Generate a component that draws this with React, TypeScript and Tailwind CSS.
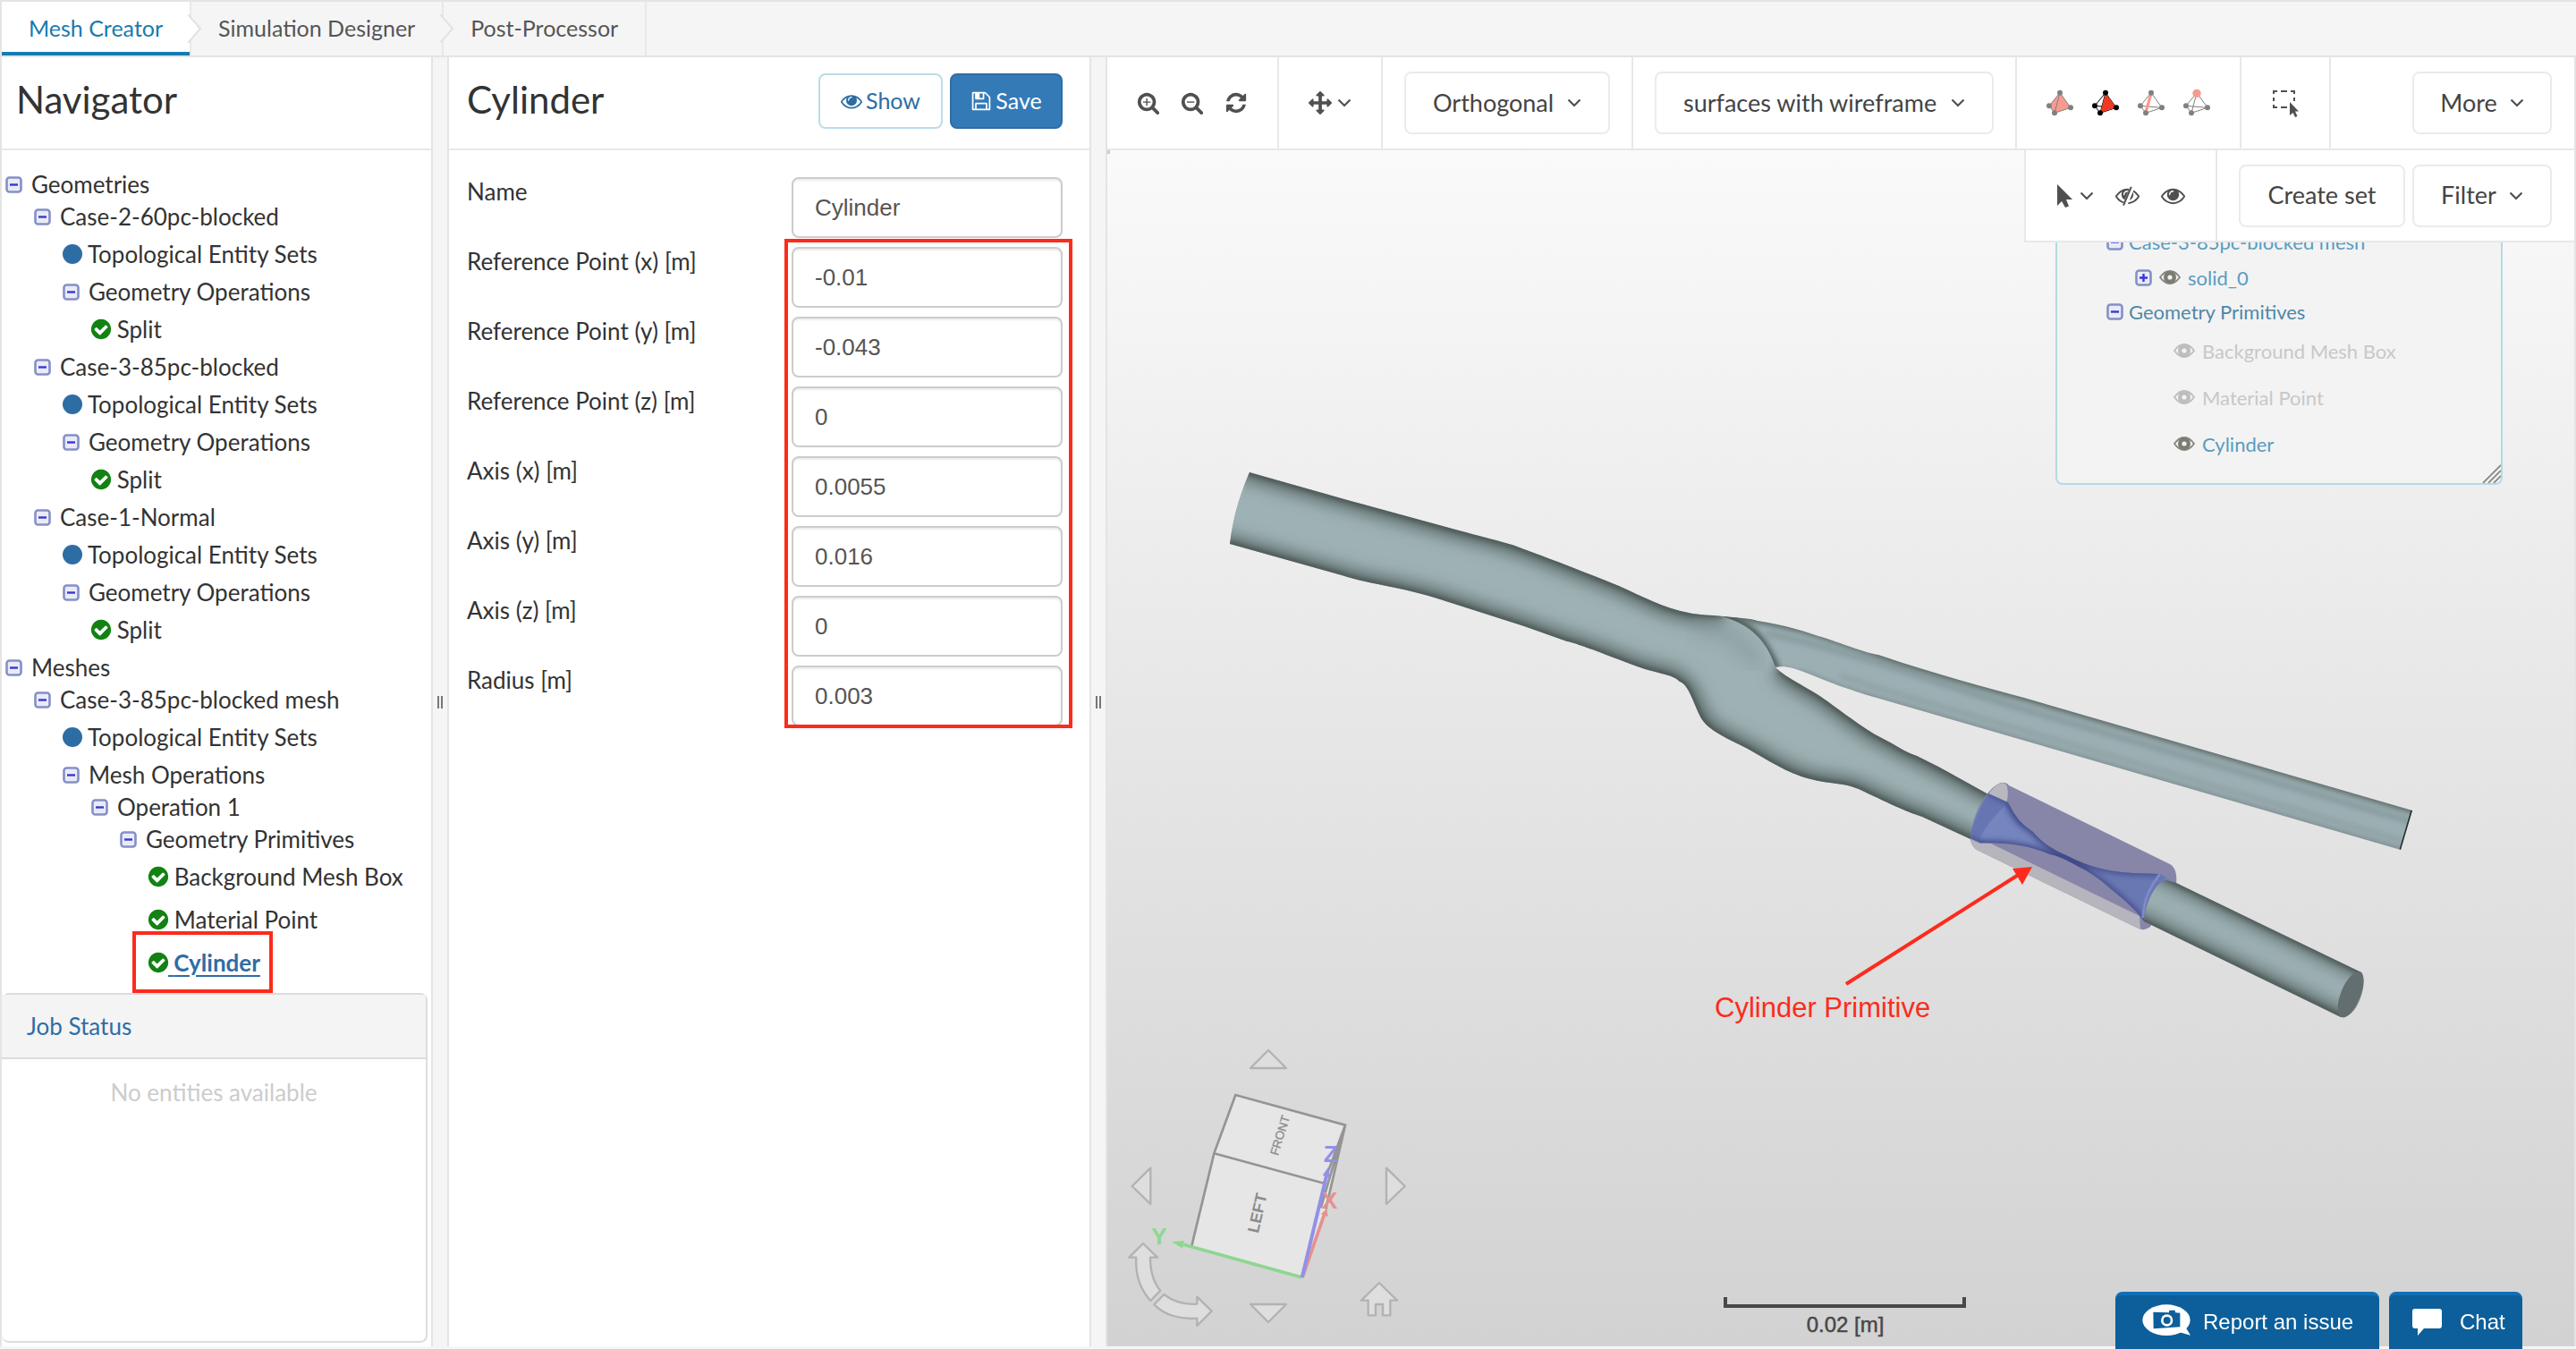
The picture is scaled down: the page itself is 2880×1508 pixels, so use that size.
import { useState } from 'react';
import type { ReactNode } from 'react';

const EYE = 'M1664 960q-152-236-381-353 61 104 61 225 0 185-131.5 316.5t-316.5 131.5-316.5-131.5-131.5-316.5q0-121 61-225-229 117-381 353 133 205 333.5 326.5t434.5 121.5 434.5-121.5 333.5-326.5zm-720-384q0-20-14-34t-34-14q-125 0-214.5 89.5t-89.5 214.5q0 20 14 34t34 14 34-14 14-34q0-86 61-147t147-61q20 0 34-14t14-34zm848 384q0 34-20 69-140 230-376.5 368.5t-499.5 138.5-499.5-139-376.5-368q-20-35-20-69t20-69q140-229 376.5-368t499.5-139 499.5 139 376.5 368q20 35 20 69z';
const LENS = 'M1216 832q0-185-131.5-316.5t-316.5-131.5-316.5 131.5-131.5 316.5 131.5 316.5 316.5 131.5 316.5-131.5 131.5-316.5zm512 832q0 53-37.5 90.5t-90.5 37.5q-54 0-90-38l-343-342q-179 124-399 124-143 0-273.5-55.5t-225-150-150-225-55.5-273.5 55.5-273.5 150-225 225-150 273.5-55.5 273.5 55.5 225 150 150 225 55.5 273.5q0 220-124 399l343 343q37 37 37 90z';
const REFRESH = 'M1639 1056q0 5-1 7-64 268-268 434.5t-478 166.5q-146 0-282.5-55t-243.5-157l-129 129q-19 19-45 19t-45-19-19-45v-448q0-26 19-45t45-19h448q26 0 45 19t19 45-19 45l-137 137q71 66 161 102t187 36q134 0 250-65t186-179q11-17 53-117 8-23 30-23h192q13 0 22.5 9.5t9.5 22.5zm25-800v448q0 26-19 45t-45 19h-448q-26 0-45-19t-19-45 19-45l138-138q-148-137-349-137-134 0-250 65t-186 179q-11 17-53 117-8 23-30 23h-199q-13 0-22.5-9.5t-9.5-22.5v-7q65-268 270-434.5t480-166.5q146 0 284 55.5t245 156.5l130-129q19-19 45-19t45 19 19 45z';
const ARROWS = 'M1792 896q0 26-19 45l-256 256q-19 19-45 19t-45-19-19-45v-128h-384v384h128q26 0 45 19t19 45-19 45l-256 256q-19 19-45 19t-45-19l-256-256q-19-19-19-45t19-45 45-19h128v-384h-384v128q0 26-19 45t-45 19-45-19l-256-256q-19-19-19-45t19-45l256-256q19-19 45-19t45 19 19 45v128h384v-384h-128q-26 0-45-19t-19-45 19-45l256-256q19-19 45-19t45 19l256 256q19 19 19 45t-19 45-45 19h-128v384h384v-128q0-26 19-45t45-19 45 19l256 256q19 19 19 45z';
const SAVE = 'M512 1536h768v-384h-768v384zm896 0h128v-896q0-14-10-38.5t-20-34.5l-281-281q-10-10-34-20t-39-10v416q0 40-28 68t-68 28h-576q-40 0-68-28t-28-68v-416h-128v1280h128v-416q0-40 28-68t68-28h832q40 0 68 28t28 68v416zm-384-928v-320q0-13-9.5-22.5t-22.5-9.5h-192q-13 0-22.5 9.5t-9.5 22.5v320q0 13 9.5 22.5t22.5 9.5h192q13 0 22.5-9.5t9.5-22.5zm640 32v928q0 40-28 68t-68 28h-1344q-40 0-68-28t-28-68v-1344q0-40 28-68t68-28h928q40 0 88 20t76 48l280 280q28 28 48 76t20 88z';
const CHECK = 'M1412 734q0-28-18-46l-91-90q-19-19-45-19t-45 19l-408 407-226-226q-19-19-45-19t-45 19l-91 90q-18 18-18 46 0 27 18 45l362 362q19 19 45 19 27 0 46-19l543-543q18-18 18-45zm252 162q0 209-103 385.5t-279.5 279.5-385.5 103-385.5-103-279.5-279.5-103-385.5 103-385.5 279.5-279.5 385.5-103 385.5 103 279.5 279.5 103 385.5z';

const Glyph = ({ d, className, children }: { d: string; className: string; children?: ReactNode }) => (
    <svg viewBox="0 0 1792 1792" className={`shrink-0 ${className}`} fill="currentColor" aria-hidden="true">
        <path d={d} />
        {children}
    </svg>
);

const Chevron = () => (
    <svg viewBox="0 0 16 10" className="w-4 h-[10px] shrink-0" fill="none" stroke="#505050" strokeWidth="2.2" aria-hidden="true">
        <path d="M1.5 1.5L8 8L14.5 1.5" />
    </svg>
);

const Toggle = ({ plus = false }: { plus?: boolean }) => (
    <svg viewBox="0 0 19 19" className="w-[19px] h-[19px] shrink-0" aria-hidden="true">
        <rect x="1.5" y="1.5" width="16" height="16" rx="3" fill="#e9ebf5" stroke="#8490c8" strokeWidth="2.6" />
        <path d={plus ? 'M5 9.5h9M9.5 5v9' : 'M5 9.5h9'} stroke="#3a36d8" strokeWidth="2.4" />
    </svg>
);

// Small eye used by the scene tree
const SceneEye = ({ muted = false }: { muted?: boolean }) => (
    <svg viewBox="0 0 24 18" className="w-6 h-[18px] shrink-0" aria-hidden="true">
        <path d="M1 9Q6 2 12 2T23 9Q18 16 12 16T1 9Z" fill="none" stroke={muted ? '#bdbdbd' : '#85867d'} strokeWidth="1.8" />
        <circle cx="12" cy="9" r="4.8" fill="none" stroke={muted ? '#bdbdbd' : '#7b7c73'} strokeWidth="4.4" />
    </svg>
);

type TetraKind = 'volume' | 'face' | 'edge' | 'node';

const Tetra = ({ kind }: { kind: TetraKind }) => {
    const color = kind === 'face' ? '#000000' : '#808080';
    const apex = kind === 'node' ? '#f89a8e' : color;
    return (
        <svg viewBox="0 0 96 96" className="w-8 h-8" aria-hidden="true">
            {kind === 'volume' && <path d="M48 14L12 58L30 82L84 64Z" fill="#f89a8e" />}
            <path
                d={kind === 'volume' ? 'M48 14L12 58L30 82L84 64ZM48 14L30 82' : 'M48 14L12 58L30 82L84 64ZM48 14L30 82M12 58L84 64'}
                fill="none"
                stroke={color}
                strokeWidth="3"
            />
            {kind === 'face' && <path d="M48 16L30 82L84 64Z" fill="#ee3a24" />}
            {kind === 'edge' && <path d="M47 20L31 76" stroke="#f89a8e" strokeWidth="10" />}
            <circle cx="12" cy="58" r="9" fill={color} />
            <circle cx="30" cy="82" r="9" fill={color} />
            <circle cx="84" cy="64" r="9" fill={color} />
            <circle cx="48" cy={kind === 'node' ? 16 : 14} r={kind === 'node' ? 14 : 9} fill={apex} />
        </svg>
    );
};

interface TreeNode {
    label: string;
    level: number;
    kind: 'folder' | 'set' | 'done';
    selected?: boolean;
}

const TREE: TreeNode[] = [
    { label: 'Geometries', level: 0, kind: 'folder' },
    { label: 'Case-2-60pc-blocked', level: 1, kind: 'folder' },
    { label: 'Topological Entity Sets', level: 2, kind: 'set' },
    { label: 'Geometry Operations', level: 2, kind: 'folder' },
    { label: 'Split', level: 3, kind: 'done' },
    { label: 'Case-3-85pc-blocked', level: 1, kind: 'folder' },
    { label: 'Topological Entity Sets', level: 2, kind: 'set' },
    { label: 'Geometry Operations', level: 2, kind: 'folder' },
    { label: 'Split', level: 3, kind: 'done' },
    { label: 'Case-1-Normal', level: 1, kind: 'folder' },
    { label: 'Topological Entity Sets', level: 2, kind: 'set' },
    { label: 'Geometry Operations', level: 2, kind: 'folder' },
    { label: 'Split', level: 3, kind: 'done' },
    { label: 'Meshes', level: 0, kind: 'folder' },
    { label: 'Case-3-85pc-blocked mesh', level: 1, kind: 'folder' },
    { label: 'Topological Entity Sets', level: 2, kind: 'set' },
    { label: 'Mesh Operations', level: 2, kind: 'folder' },
    { label: 'Operation 1', level: 3, kind: 'folder' },
    { label: 'Geometry Primitives', level: 4, kind: 'folder' },
    { label: 'Background Mesh Box', level: 5, kind: 'done' },
    { label: 'Material Point', level: 5, kind: 'done' },
    { label: 'Cylinder', level: 5, kind: 'done', selected: true },
];

const INDENT = ['pl-1', 'pl-9', 'pl-[68px]', 'pl-[100px]', 'pl-[132px]', 'pl-[164px]'];

const TreeRow = ({ node }: { node: TreeNode }) => {
    if (node.kind === 'folder') {
        return (
            <li className={`flex items-center gap-[10px] h-9 ${INDENT[node.level]}`}>
                <Toggle />
                <span>{node.label}</span>
            </li>
        );
    }
    return (
        <li className={`flex items-center h-12 ${INDENT[node.level]}`}>
            <div className="relative flex items-center">
                {node.kind === 'set' ? (
                    <span className="w-[22px] h-[22px] rounded-full bg-[#2e6da4]" />
                ) : (
                    <Glyph d={CHECK} className="w-[26px] h-[26px] -mx-[2px] text-[#128212]" />
                )}
                {node.selected ? (
                    <a href="#cylinder" className="whitespace-pre font-bold text-[#2e6da4] underline decoration-2 underline-offset-4"> {node.label}</a>
                ) : (
                    <span className="whitespace-pre"> {node.label}</span>
                )}
                {node.selected && <span className="absolute -left-[18px] -right-[14px] -top-4 -bottom-[14px] border-4 border-[#fc2b1c]" />}
            </div>
        </li>
    );
};

const Splitter = () => (
    <div className="flex w-4 shrink-0 items-center justify-center gap-[2px]">
        <span className="w-[2px] h-[14px] bg-[#777777]" />
        <span className="w-[2px] h-[14px] bg-[#777777]" />
    </div>
);

const FIELDS = [
    ['Reference Point (x) [m]', '-0.01'],
    ['Reference Point (y) [m]', '-0.043'],
    ['Reference Point (z) [m]', '0'],
    ['Axis (x) [m]', '0.0055'],
    ['Axis (y) [m]', '0.016'],
    ['Axis (z) [m]', '0'],
    ['Radius [m]', '0.003'],
];

const Field = ({ id, label, value }: { id: string; label: string; value: string }) => {
    const [text, setText] = useState(value);
    return (
        <div className="flex items-start justify-between">
            <label htmlFor={id} className="leading-8">{label}</label>
            <input
                id={id}
                value={text}
                onChange={(e) => setText(e.target.value)}
                className="w-[303px] h-[68px] rounded-lg border-2 border-[#cccccc] bg-white px-6 font-['Liberation_Sans',sans-serif] text-[26px] text-[#555555] shadow-[inset_0_2px_2px_rgba(0,0,0,0.075)]"
            />
        </div>
    );
};

const TabArrow = ({ fill }: { fill: string }) => (
    <svg viewBox="0 0 16 32" className="absolute -right-[14px] top-[14px] z-10 w-4 h-8" aria-hidden="true">
        <path d="M0 0L14 16L0 32Z" fill={fill} />
        <path d="M0 0L14 16L0 32" fill="none" stroke="#e2e2e2" strokeWidth="2" />
    </svg>
);

const MAIN = 'M1397 528L1510 560L1631 593C1680 606 1690 608 1704 614C1740 627 1780 643 1810 655C1835 666 1860 680 1888 685C1900 688 1912 687 1927 689C1960 694 1980 712 1985 746C1996 757 2012 764 2033 777C2050 788 2078 811 2100 823C2120 833 2130 841 2143 845L2167 857L2178 863L2223 888L2203 938L2149 913C2130 907 2110 897 2078 882C2055 873 2045 878 2014 868C1990 860 1965 842 1946 833C1915 818 1908 812 1902 803C1894 788 1888 765 1878 762C1870 753 1850 753 1825 743C1790 730 1760 718 1752 717L1704 700L1607 669C1560 655 1530 653 1500 643L1375 608C1378 575 1388 548 1397 528Z';
const MAIN_TOP = 'M1380 523L1510 560L1631 593C1680 606 1690 608 1704 614C1740 627 1780 643 1810 655C1835 666 1860 680 1888 685L1927 687';
const MAIN_MIDDLE = 'M1988 748C1996 757 2012 764 2033 777C2050 788 2078 811 2100 823C2120 833 2130 841 2143 845L2178 863L2235 894';
const MAIN_BOTTOM = 'M2215 943L2149 913C2130 907 2110 897 2078 882C2055 873 2045 878 2014 868C1990 860 1965 842 1946 833C1915 818 1908 812 1902 803C1894 788 1888 765 1878 762C1870 753 1850 753 1825 743C1790 730 1760 718 1752 717L1704 700L1607 669C1560 655 1530 653 1500 643L1360 604';
const BRANCH = 'M1925 689C1950 691 1960 692 1965 694C1990 698 2010 703 2033 711C2060 719 2085 730 2100 732C2150 749 2210 766 2263 780L2697 906L2684 950L2098 780C2080 775 2070 771 2057 767L2019 752C2005 747 1995 744 1985 746C1978 725 1965 700 1925 689Z';
const TAIL = 'M2433 987L2640 1087C2648 1096 2638 1138 2617 1137L2397 1030C2398 1010 2410 985 2422 984Z';
const STENOSIS = 'M2223 887L2245 897C2256 918 2262 922 2272 929C2285 944 2296 950 2310 956C2330 966 2350 974 2385 976L2415 977L2433 987L2422 984C2410 985 2398 1010 2397 1030C2390 1020 2380 1010 2364 997C2350 985 2340 977 2328 971C2315 964 2305 958 2292 955C2270 946 2250 942 2214 942L2203 937C2204 920 2213 900 2223 887Z';

const Artery = () => (
    <svg viewBox="1238 168 1640 1337" className="absolute inset-0 h-full w-full" role="img" aria-label="Artery geometry with a cylinder primitive">
        <defs>
            <filter id="wide" x="-10%" y="-10%" width="120%" height="120%">
                <feGaussianBlur stdDeviation="9" />
            </filter>
            <filter id="thin" x="-10%" y="-10%" width="120%" height="120%">
                <feGaussianBlur stdDeviation="3" />
            </filter>
            <clipPath id="main"><path d={MAIN} /></clipPath>
            <clipPath id="branch"><path d={BRANCH} /></clipPath>
            <clipPath id="tail"><path d={TAIL} /></clipPath>
            <clipPath id="stenosis"><path d={STENOSIS} /></clipPath>
        </defs>

        <g clipPath="url(#main)">
            <path d={MAIN} fill="#9eb1b4" />
            <g filter="url(#wide)" fill="none" stroke="#5c6b69" strokeWidth="20">
                <path d={MAIN_TOP} />
                <path d={MAIN_MIDDLE} />
                <path d={MAIN_BOTTOM} />
            </g>
            <g filter="url(#thin)" fill="none" stroke="#3c4744" strokeWidth="5">
                <path d={MAIN_TOP} />
                <path d={MAIN_MIDDLE} />
                <path d={MAIN_BOTTOM} />
            </g>
            <path d="M1893 700C1925 702 1950 715 1966 745" fill="none" stroke="#7c8f92" strokeWidth="16" opacity="0.45" filter="url(#wide)" />
        </g>

        <g clipPath="url(#branch)">
            <path d={BRANCH} fill="#9cafb3" />
            <g filter="url(#thin)" fill="none">
                <path d="M1925 686C2000 694 2040 709 2100 730C2150 747 2210 764 2263 778L2705 906" stroke="#5a6764" strokeWidth="10" />
                <path d="M1975 708C2060 725 2160 762 2263 793L2697 919" stroke="#7b8d91" strokeWidth="5" opacity="0.8" />
                <path d="M1985 750L2019 756L2057 771L2098 783L2690 954" stroke="#7b8c8f" strokeWidth="9" />
                <path d="M2057 755L2098 769L2690 941" stroke="#8a9c9f" strokeWidth="4" />
            </g>
            <path d="M1925 689C1962 698 1974 722 1986 748" fill="none" stroke="#4a5855" strokeWidth="9" filter="url(#thin)" />
            <path d="M2697 906L2684 950" stroke="#1f2b2b" strokeWidth="3" />
        </g>

        {/* translucent cylinder around the narrowed section */}
        <path d="M2203 938C2204 910 2222 880 2237 875Q2243 874 2246 878L2426 966C2433 970 2434 980 2433 988L2404 1036Q2398 1041 2391 1038L2210 950Q2204 946 2203 938Z" fill="#8785a8" />
        <path d="M2203 938L2214 943L2226 943L2392 1024L2393 1039L2210 950Q2204 946 2203 938Z" fill="#b6b5bd" />
        <path d="M2223 888Q2231 876 2239 875Q2243 876 2244 879Q2246 890 2243 897Z" fill="#b9b8bf" />
        <g clipPath="url(#stenosis)">
            <path d={STENOSIS} fill="#7585be" />
            <g filter="url(#thin)" fill="none" stroke="#3f4988" strokeWidth="9">
                <path d="M2223 885L2245 895C2256 918 2262 922 2272 927C2285 942 2296 948 2310 954C2330 964 2350 972 2385 974L2415 975" />
                <path d="M2397 1032C2390 1022 2380 1012 2364 999C2350 987 2340 979 2328 973C2315 966 2305 960 2292 957C2270 948 2250 944 2214 944L2200 938" />
            </g>
            <path d="M2245 897Q2216 925 2212 942L2200 936L2222 885Z" fill="#5664a4" opacity="0.45" />
            <path d="M2340 960L2425 975L2397 1034L2335 985Z" fill="#55629f" opacity="0.35" filter="url(#thin)" />
            <path d="M2415 977Q2396 1000 2396 1026" fill="none" stroke="#7c8ac6" strokeWidth="3" />
        </g>

        <g clipPath="url(#tail)">
            <path d={TAIL} fill="#9cafb2" />
            <g filter="url(#wide)" fill="none" stroke="#5c6b69" strokeWidth="18">
                <path d="M2405 971L2655 1092" />
                <path d="M2380 1022L2630 1143" />
            </g>
            <g filter="url(#thin)" fill="none" stroke="#3c4744" strokeWidth="5">
                <path d="M2405 973L2655 1094" />
                <path d="M2380 1022L2630 1143" />
            </g>
        </g>
        <ellipse cx="2628" cy="1112" rx="11" ry="27" transform="rotate(22 2628 1112)" fill="#626e70" />

        <path d="M2064 1100L2258 977" stroke="#fc2b1c" strokeWidth="4" />
        <path d="M2272 969L2250 971L2261 989Z" fill="#fc2b1c" />
        <text x="1917" y="1137" fill="#fc2b1c" fontSize="31" fontFamily="'Liberation Sans', sans-serif">Cylinder Primitive</text>

        <path d="M1929 1450V1460H2196V1450" fill="none" stroke="#484848" strokeWidth="4" />
        <text x="2063" y="1489" textAnchor="middle" fill="#484848" stroke="#484848" strokeWidth="0.5" fontSize="24" fontFamily="'Liberation Sans', sans-serif">0.02 [m]</text>
    </svg>
);

const ViewCube = () => (
    <svg viewBox="24 0 1116 1065" className="absolute bottom-0 left-0 w-[372px] h-[355px]" role="img" aria-label="View cube">
        <g fill="#dedede" stroke="#b2b2b2" strokeWidth="7" strokeLinejoin="round">
            <path d="M564 72L624 132H504Z" />
            <path d="M564 984L624 924H504Z" />
            <path d="M107 528L169 467V588Z" />
            <path d="M1022 528L960 467V588Z" />
            <path d="M144 720L192 767H168C168 812 178 850 202 878L169 912C130 870 118 820 121 767H97Z" />
            <path d="M374 947L325 996V971C270 976 215 960 181 925L214 891C245 915 285 926 325 923V899Z" />
            <path d="M936 852L996 911H973V961H948V924H924V961H899V911H876Z" />
        </g>
        <path d="M454 222L822 323L768 560L677 832L307 728L382 418Z" fill="#e6e6e6" />
        <path d="M307 728L382 418L454 222L822 323L750 518L382 418M822 323L757 605M822 323L740 600" fill="none" stroke="#949494" strokeWidth="8" />
        <text x="0" y="0" transform="translate(596 427) rotate(-73)" fill="#8c8c8c" stroke="#8c8c8c" strokeWidth="1" fontSize="40" fontFamily="'Liberation Sans', sans-serif">FRONT</text>
        <text x="0" y="0" transform="translate(530 688) rotate(-77)" fill="#8c8c8c" fontSize="54" fontFamily="'Liberation Sans', sans-serif" fontWeight="bold">LEFT</text>
        <path d="M677 834L280 724" stroke="#8fd68f" strokeWidth="11" />
        <path d="M240 715L282 711L276 736Z" fill="#8fd68f" />
        <path d="M679 832L752 622" stroke="#e79090" strokeWidth="11" />
        <path d="M760 604L764 630L740 622Z" fill="#e79090" />
        <path d="M677 834L760 490" stroke="#9191e8" strokeWidth="12" />
        <path d="M766 463L769 498L746 492Z" fill="#9191e8" />
        <g fontSize="80" fontFamily="'Liberation Sans', sans-serif" fontWeight="bold" textAnchor="middle">
            <text x="198" y="722" fill="#8fd68f">Y</text>
            <text x="774" y="446" fill="#9191e8">Z</text>
            <text x="769" y="603" fill="#e79090">X</text>
        </g>
    </svg>
);

const SCENE_LEAVES = [
    { label: 'Background Mesh Box', visible: false },
    { label: 'Material Point', visible: false },
    { label: 'Cylinder', visible: true },
];

const SceneTree = () => (
    <div className="absolute right-20 top-0 w-[500px] rounded-lg border-2 border-[#b2dae8] bg-[#f3f3f3] pt-20 pb-[18px] text-[22px] text-[#5a9cc0]">
        <ul>
            <li className="flex items-center gap-[6px] h-10 pl-[55px]"><Toggle />Case-3-85pc-blocked mesh</li>
            <li className="flex items-center gap-2 h-10 pl-[87px]"><Toggle plus /><SceneEye />solid_0</li>
            <li className="flex items-center gap-[6px] h-9 pl-[55px] text-[#4f88a8]"><Toggle />Geometry Primitives</li>
            {SCENE_LEAVES.map((leaf) => (
                <li key={leaf.label} className={`flex items-center gap-2 h-[52px] pl-[130px] ${leaf.visible ? '' : 'text-[#c8c8c8]'}`}>
                    <SceneEye muted={!leaf.visible} />
                    {leaf.label}
                </li>
            ))}
        </ul>
        <svg viewBox="0 0 22 22" className="absolute right-0 bottom-0 w-[22px] h-[22px]" fill="none" stroke="#8a8a8a" strokeWidth="1.8" aria-hidden="true">
            <path d="M2 22L22 2M8 22L22 8M14 22L22 14" />
        </svg>
    </div>
);

const GROUP = 'flex items-center border-r-2 border-[#e8e8e8]';
const BOX = 'h-[70px] rounded-lg border-2 border-[#ebebeb] bg-white text-[27px] text-[#444444]';

const Picker = ({ label, value, width }: { label: string; value: string; width: string }) => (
    <div className={`relative flex items-center ${width}`}>
        <select aria-label={label} className={`w-full appearance-none pl-[30px] ${BOX}`}>
            <option>{value}</option>
        </select>
        <span className="pointer-events-none absolute right-8 flex"><Chevron /></span>
    </div>
);

const App = () => {
    return (
        <div className="flex min-h-screen flex-col border-t-2 border-[#e4e4e4] bg-[#f5f5f5] pb-[3px] font-['Lato',sans-serif] text-[26px] text-[#333333]">
            <nav className="flex h-[62px] border-b-2 border-l-2 border-[#e4e4e4] text-[25px] text-[#555555]">
                <a href="#mesh" className="relative flex items-center border-r-2 border-[#e8e8e8] bg-white px-[30px] text-[#167bb0] shadow-[inset_0_-4px_0_#167bb0]">
                    Mesh Creator
                    <TabArrow fill="#ffffff" />
                </a>
                <a href="#simulation" className="relative flex items-center border-r-2 border-[#e8e8e8] px-[30px]">
                    Simulation Designer
                    <TabArrow fill="#f5f5f5" />
                </a>
                <a href="#post" className="flex items-center border-r-2 border-[#e8e8e8] px-[30px]">Post-Processor</a>
            </nav>

            <main className="flex flex-1">
                <section className="flex w-[484px] shrink-0 flex-col border-x-2 border-[#e4e4e4] bg-white pb-1">
                    <h1 className="flex h-[104px] items-center border-b-2 border-[#e8e8e8] px-4 pb-2 text-[42px]">Navigator</h1>
                    <ul className="pt-5 pb-[10px]">
                        {TREE.map((node, i) => <TreeRow key={i} node={node} />)}
                    </ul>
                    <div className="mr-1 flex flex-1 flex-col rounded-lg border-2 border-l-0 border-[#dcdcdc]">
                        <h2 className="flex h-[72px] items-center border-b-2 border-[#dcdcdc] bg-[#f4f4f4] px-7 text-[#2e6da4]">Job Status</h2>
                        <p className="pt-[18px] text-center text-[#cccccc]">No entities available</p>
                    </div>
                </section>

                <Splitter />

                <section className="w-[720px] shrink-0 border-x-2 border-[#e4e4e4] bg-white">
                    <header className="flex h-[104px] items-center gap-2 border-b-2 border-[#e8e8e8] pl-5 pr-[30px] pb-1">
                        <h1 className="flex-1 pb-1 text-[42px]">Cylinder</h1>
                        <button className="flex h-[62px] w-[139px] items-center justify-center gap-1 rounded-lg border-2 border-[#bcdcea] bg-white text-[25px] text-[#2e6da4]">
                            <Glyph d={EYE} className="w-6 h-6" />Show
                        </button>
                        <button className="flex h-[62px] w-[126px] items-center justify-center gap-1 rounded-lg border-2 border-[#2e6da4] bg-[#337ab7] text-[25px] text-white">
                            <Glyph d={SAVE} className="w-6 h-6" />Save
                        </button>
                    </header>
                    <form className="flex flex-col gap-[10px] pt-[30px] pl-5 pr-[30px]">
                        <Field id="name" label="Name" value="Cylinder" />
                        <div className="relative flex flex-col gap-[10px]">
                            {FIELDS.map(([label, value], i) => <Field key={label} id={`field-${i}`} label={label} value={value} />)}
                            <span className="pointer-events-none absolute -right-[11px] -top-[9px] -bottom-[2px] w-[322px] border-4 border-[#fc2b1c]" />
                        </div>
                    </form>
                </section>

                <Splitter />

                <section className="flex min-w-0 flex-1 flex-col border-x-2 border-[#e4e4e4]">
                    <div className="flex h-[104px] border-b-2 border-[#e8e8e8] bg-white text-[#505050]">
                        <div className={`${GROUP} gap-[23px] px-[33px]`}>
                            <button aria-label="Zoom in"><Glyph d={LENS} className="w-[26px] h-[26px]"><path d="M480 784h576v96H480zM720 544h96v576h-96z" /></Glyph></button>
                            <button aria-label="Zoom out"><Glyph d={LENS} className="w-[26px] h-[26px]"><path d="M480 784h576v96H480z" /></Glyph></button>
                            <button aria-label="Reset view"><Glyph d={REFRESH} className="w-[26px] h-[26px]" /></button>
                        </div>
                        <div className={`${GROUP} px-[33px]`}>
                            <button aria-label="Move" className="flex items-center gap-[6px]"><Glyph d={ARROWS} className="w-[26px] h-[26px]" /><Chevron /></button>
                        </div>
                        <div className={`${GROUP} px-6`}><Picker label="Projection" value="Orthogonal" width="w-[230px]" /></div>
                        <div className={`${GROUP} px-6`}><Picker label="Render mode" value="surfaces with wireframe" width="w-[379px]" /></div>
                        <div className={`${GROUP} gap-[19px] px-8`}>
                            <button aria-label="Pick volumes"><Tetra kind="volume" /></button>
                            <button aria-label="Pick faces"><Tetra kind="face" /></button>
                            <button aria-label="Pick edges"><Tetra kind="edge" /></button>
                            <button aria-label="Pick nodes"><Tetra kind="node" /></button>
                        </div>
                        <div className={`${GROUP} px-[33px]`}>
                            <button aria-label="Box selection">
                                <svg viewBox="0 0 32 32" className="w-8 h-8" aria-hidden="true">
                                    <path d="M3 6V3H7M11 3H18M22 3H26V6M3 10V14M3 18V21H7M11 21H18M26 10V14" fill="none" stroke="#505050" strokeWidth="2" />
                                    <path d="M21 15V30L24.500 27L27 32L29.500 31L27 25.500H31Z" fill="#505050" />
                                </svg>
                            </button>
                        </div>
                        <div className="flex flex-1 items-center justify-end pr-[25px]">
                            <button className={`flex w-[156px] items-center justify-center gap-[14px] ${BOX}`}>More<Chevron /></button>
                        </div>
                    </div>

                    <div className="relative flex-1 overflow-hidden bg-gradient-to-b from-[#fafafa] to-[#d2d2d2]">
                        <span className="absolute left-0 top-0 h-1 w-[3px] bg-[#cccccc]" />
                        <Artery />
                        <ViewCube />
                        <SceneTree />
                        <div className="absolute right-0 top-0 flex h-[103px] border-b-2 border-l-2 border-[#e8e8e8] bg-white text-[#505050]">
                            <div className={`${GROUP} gap-6 px-[34px]`}>
                                <button aria-label="Selection mode" className="flex items-center gap-2">
                                    <svg viewBox="0 0 18 28" className="h-7 w-[18px]" fill="#505050" aria-hidden="true">
                                        <path d="M1 1V25L6 20L10 27L14 25.500L11 18H18Z" />
                                    </svg>
                                    <Chevron />
                                </button>
                                <button aria-label="Hide selection">
                                    <svg viewBox="0 0 1792 1792" className="w-[27px] h-[27px]" fill="currentColor" aria-hidden="true">
                                        <path d={EYE} />
                                        <path d="M1290 230L700 1640" stroke="#ffffff" strokeWidth="330" />
                                        <path d="M1180 250L600 1640" stroke="currentColor" strokeWidth="130" />
                                    </svg>
                                </button>
                                <button aria-label="Show selection"><Glyph d={EYE} className="w-[27px] h-[27px]" /></button>
                            </div>
                            <div className="flex items-center gap-2 pl-6 pr-[25px]">
                                <button className={`w-[186px] ${BOX}`}>Create set</button>
                                <button className={`flex w-[156px] items-center justify-center gap-[14px] ${BOX}`}>Filter<Chevron /></button>
                            </div>
                        </div>
                    </div>
                </section>
            </main>

            <div className="fixed bottom-0 right-[60px] flex items-end gap-[11px] font-['Liberation_Sans',sans-serif] text-[24px] text-white">
                <button className="flex h-16 w-[295px] items-center gap-[14px] rounded-t-lg border-t-4 border-[#106fb8] bg-[#0c5f9a] pl-[30px] pb-1">
                    <svg viewBox="0 0 162 108" className="h-9 w-[54px]" aria-hidden="true">
                        <ellipse cx="81" cy="53" rx="80" ry="52" fill="#ffffff" />
                        <path d="M120 92L162 104L144 74Z" fill="#ffffff" />
                        <path d="M37 26L90 28L91 20H110L111 28L127 29V76L38 82Z" fill="#0c5f9a" />
                        <circle cx="83" cy="54" r="20" fill="#ffffff" />
                        <circle cx="83" cy="54" r="12" fill="#0c5f9a" />
                    </svg>
                    <span className="pt-1">Report an issue</span>
                </button>
                <button className="flex h-16 w-[149px] items-center gap-5 rounded-t-lg border-t-4 border-[#106fb8] bg-[#0c5f9a] pl-[26px]">
                    <svg viewBox="0 0 33 30" className="h-[30px] w-[33px]" fill="#ffffff" aria-hidden="true">
                        <path d="M3 0H30Q33 0 33 3V19Q33 22 30 22H13L6 30V22H3Q0 22 0 19V3Q0 0 3 0Z" />
                    </svg>
                    Chat
                </button>
            </div>
        </div>
    );
};

export default App;
